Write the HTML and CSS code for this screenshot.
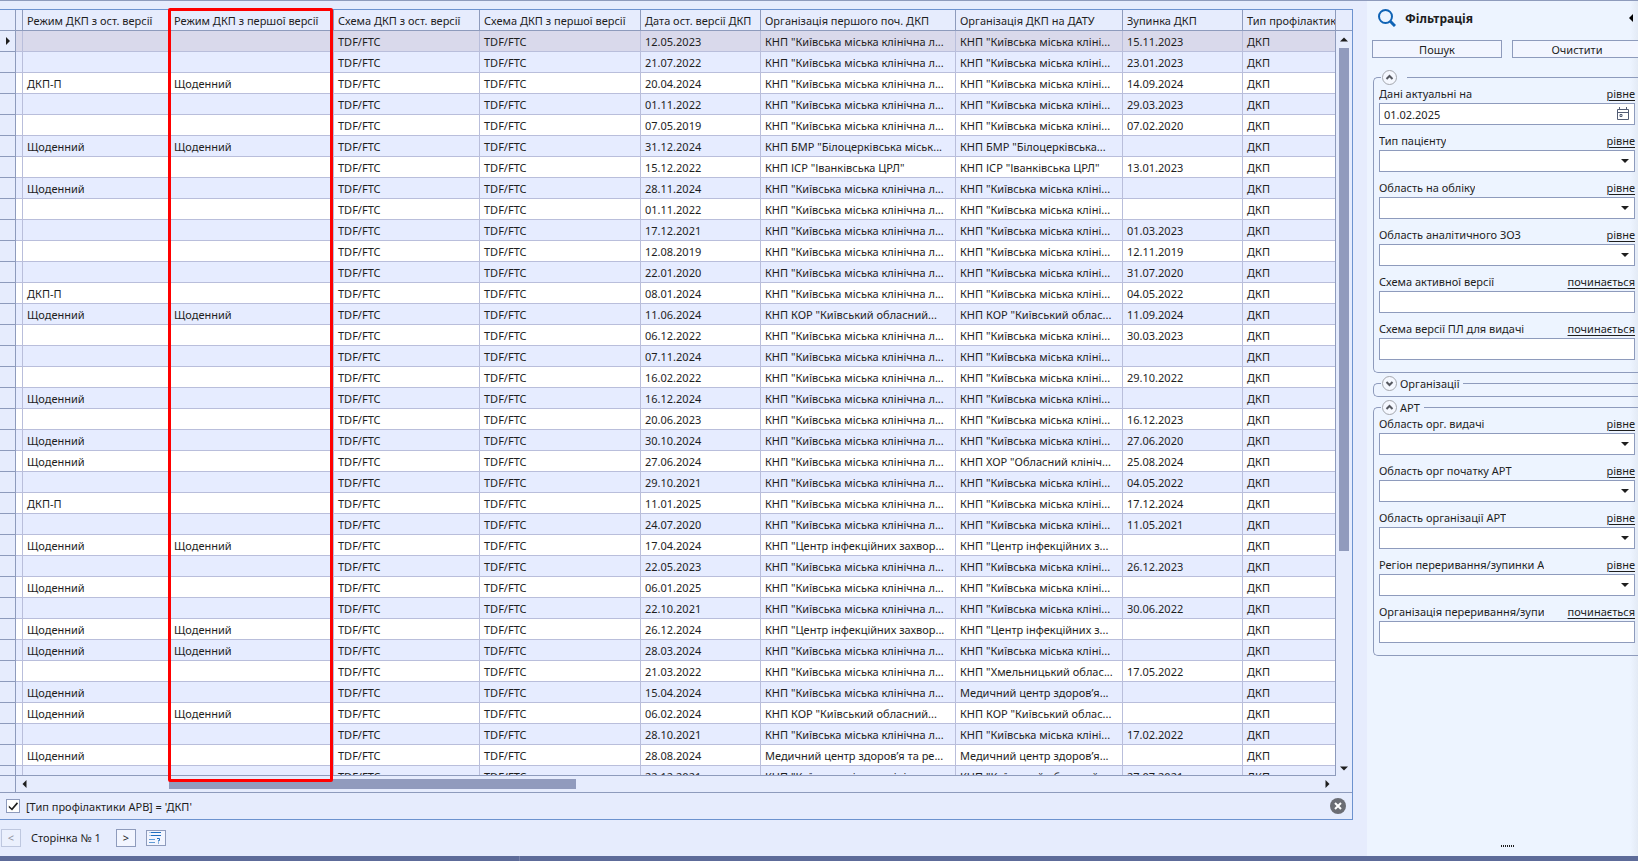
FILE: index.html
```
<!DOCTYPE html>
<html lang="uk">
<head>
<meta charset="utf-8">
<title>Фільтрація</title>
<link rel="stylesheet" href="styles.css">
</head>
<body>
<div class="workspace">
  <main class="content">
    <section class="grid">
      <div class="viewport">
        <table class="table">
          <colgroup>
            <col class="c-mark"><col class="c-gap"><col class="c-mode-last"><col class="c-mode-first">
            <col class="c-scheme-last"><col class="c-scheme-first"><col class="c-date"><col class="c-org-first">
            <col class="c-org-date"><col class="c-stop"><col>
          </colgroup>
          <thead>
            <tr>
              <th></th><th></th>
              <th>Режим ДКП з ост. версії</th>
              <th>Режим ДКП з першої версії</th>
              <th>Схема ДКП з ост. версії</th>
              <th>Схема ДКП з першої версії</th>
              <th>Дата ост. версії ДКП</th>
              <th>Організація першого поч. ДКП</th>
              <th>Організація ДКП на ДАТУ</th>
              <th>Зупинка ДКП</th>
              <th>Тип профілактики АРВ</th>
            </tr>
          </thead>
          <tbody id="rows"></tbody>
        </table>
      </div>
      <div class="vscroll">
        <div class="vscroll-head"></div>
        <svg class="arrow" width="8" height="5" viewBox="0 0 8 5"><path d="M0 4.5 4 0.5 8 4.5z"/></svg>
        <div class="vscroll-track"><div class="vscroll-thumb"></div></div>
        <svg class="arrow" width="8" height="5" viewBox="0 0 8 5"><path d="M0 0.5 4 4.5 8 0.5z"/></svg>
      </div>
      <div class="hscroll">
        <div class="hscroll-mark"></div>
        <svg class="arrow" width="5" height="8" viewBox="0 0 5 8"><path d="M4.5 0 0.5 4 4.5 8z"/></svg>
        <div class="hscroll-track"><div class="hscroll-thumb"></div></div>
        <svg class="arrow" width="5" height="8" viewBox="0 0 5 8"><path d="M0.5 0 4.5 4 0.5 8z"/></svg>
      </div>
      <div class="condition">
        <input class="check" type="checkbox" id="cond" checked>
        <label for="cond">[Тип профілактики АРВ] = 'ДКП'</label>
        <button class="clear" type="button" aria-label="Очистити умову">
          <svg width="16" height="16" viewBox="0 0 16 16"><circle cx="8" cy="8" r="8" fill="#6b6d74"/><path d="M5 5 11 11M11 5 5 11" stroke="#fff" stroke-width="2"/></svg>
        </button>
      </div>
      <div class="highlight"></div>
    </section>
    <nav class="pager">
      <button class="page-btn" type="button" disabled>&lt;</button>
      <span class="page-text">Сторінка № 1</span>
      <button class="page-btn" type="button">&gt;</button>
      <button class="page-btn count-btn" type="button" aria-label="Кількість записів">
        <svg width="14" height="13" viewBox="0 0 14 13" fill="none"><path d="M2 1.5H12M2 4.5H12" stroke="#1f6fc0"/><path d="M0 8.5H6M0 11.5H6" stroke="#5f9bd6"/><path d="M0 1.5H2M0 4.5H2" stroke="#a9c8ea"/><path d="M8 7.5H10.5V9.5H9.5V10.500M9.500 11.500V12.500" stroke="#1f6fc0"/></svg>
      </button>
    </nav>
  </main>
  <aside class="side">
    <header class="side-head">
      <svg width="18" height="18" viewBox="0 0 18 18" fill="none" stroke="#0f63b5"><circle cx="7.500" cy="7.500" r="6.500" stroke-width="2"/><path d="M12 12 17 17" stroke-width="3"/></svg>
      <h2>Фільтрація</h2>
      <button class="collapse" type="button" aria-label="Згорнути"><svg width="4" height="8" viewBox="0 0 4 8"><path d="M4 0 0 4 4 8z"/></svg></button>
    </header>
    <div class="actions">
      <button type="button">Пошук</button>
      <button type="button">Очистити</button>
    </div>
    <form class="groups" id="groups"></form>
    <div class="grip"></div>
  </aside>
</div>
<footer class="status"><span></span></footer>
<script src="app.js"></script>
</body>
</html>
```
FILE: styles.css
```
* { box-sizing: border-box; }

:root {
  --line: #8e9bbc;
  --frame: #6c92cf;
  --cell-line: #b9bedb;
  --bg: #e6ecfd;
}

body {
  margin: 0;
  height: 100vh;
  display: flex;
  flex-direction: column;
  overflow: hidden;
  border-top: 1px solid var(--line);
  background: var(--bg);
  color: #1e1e1e;
  font: 11px/16px "Noto Sans", "Open Sans", sans-serif;
}

button, input, select { font: inherit; color: inherit; margin: 0; padding: 0; }
button { background: none; border: 0; }

.workspace { flex: 1; min-height: 0; display: flex; }

.content {
  flex: 1;
  min-width: 0;
  display: flex;
  flex-direction: column;
  padding: 8px 14px 0 0;
}

.grid {
  position: relative;
  flex: 1;
  min-height: 0;
  display: grid;
  grid-template-columns: 1fr 16px;
  grid-template-rows: 1fr 16px auto;
  border: 1px solid var(--frame);
  border-left: 0;
}

.viewport {
  min-width: 0;
  min-height: 0;
  overflow: hidden;
  border-right: 1px solid var(--line);
  border-bottom: 1px solid var(--line);
}

.table { width: 100%; table-layout: fixed; border-collapse: separate; border-spacing: 0; }
.c-mark { width: 16px; }
.c-gap { width: 7px; }
.c-mode-last { width: 147px; }
.c-mode-first { width: 164px; }
.c-scheme-last { width: 146px; }
.c-scheme-first { width: 161px; }
.c-date, .c-stop { width: 120px; }
.c-org-first { width: 195px; }
.c-org-date { width: 167px; }

.table th, .table td {
  height: 21px;
  padding: 2px 0 0 4px;
  border-right: 1px solid var(--cell-line);
  border-bottom: 1px solid var(--cell-line);
  font-weight: 400;
  text-align: left;
  white-space: nowrap;
  overflow: hidden;
}
.table th { border-color: var(--line); }
.table th:last-child, .table td:last-child { border-right: 0; }
.table td { background: #fff; }
.table tr:nth-child(even) td { background: #e6ecff; }
.table tr.current td { background: #d9d9eb; }
.table tbody td:first-child {
  padding: 0 0 0 6px;
  border-color: var(--line);
  background: var(--bg);
}
.table th:nth-child(-n+2), .table td:nth-child(2) { padding: 0; }
.table td svg { display: block; }

.arrow { display: block; flex: none; fill: #1e1e1e; }

.vscroll { display: flex; flex-direction: column; align-items: center; gap: 6px; padding-bottom: 5px; }
.vscroll-head { align-self: stretch; height: 21px; border-bottom: 1px solid var(--line); }
.vscroll-track { flex: 1; width: 10px; margin-bottom: 4px; }
.vscroll-thumb { height: 71%; background: #919bbd; }

.hscroll { grid-column: 1 / -1; display: flex; align-items: center; padding-right: 22px; }
.hscroll-mark { align-self: stretch; width: 16px; margin-right: 6px; border-right: 1px solid var(--line); }
.hscroll-track { flex: 1; height: 10px; padding: 0 10% 0 142px; margin: 0 6px 0 0; }
.hscroll-thumb { width: 40%; height: 10px; background: #919bbd; }

.condition {
  grid-column: 1 / -1;
  height: 27px;
  display: flex;
  align-items: center;
  gap: 6px;
  padding: 0 6px;
  border-top: 1px solid var(--line);
}
.condition label { padding-top: 2px; }
.check { appearance: none; width: 14px; height: 14px; border: 1px solid var(--line); background: #fff; }
.check:checked::before {
  content: "";
  display: block;
  width: 12px;
  height: 12px;
  background: #1e1e1e;
  clip-path: polygon(15% 45%, 40% 68%, 82% 18%, 92% 30%, 42% 88%, 15% 62%);
}
.clear { margin-left: auto; height: 16px; }
.clear svg { display: block; }

.highlight {
  position: absolute;
  left: 168px;
  top: -2px;
  bottom: 37px;
  width: 165px;
  border: 3px solid #f00;
  border-radius: 2px;
  pointer-events: none;
}

.pager { height: 36px; display: flex; align-items: center; gap: 10px; padding: 0 1px 1px; }
.page-btn { width: 20px; height: 18px; line-height: 16px; border: 1px solid var(--line); background: #f2f5ff; }
.page-btn:disabled { opacity: .45; }
.page-text { min-width: 75px; padding-top: 1px; }
.count-btn { display: flex; align-items: center; justify-content: center; height: 16px; }

.side {
  width: 271px;
  display: flex;
  flex-direction: column;
  overflow: hidden;
  padding: 8px 0 0 5px;
  background: linear-gradient(to left, #e3eaf5, #edf4ff 8px);
}
.side-head { display: flex; align-items: center; gap: 9px; height: 18px; padding: 0 5px 0 6px; }
.side-head h2 { margin: 0; padding-top: 2px; font-size: 12px; line-height: 18px; font-weight: 700; }
.collapse { margin-left: auto; height: 8px; }
.collapse svg { display: block; }

.actions { display: flex; gap: 10px; margin: 13px -4px 12px 0; }
.actions button { flex: 1; height: 18px; line-height: 17px; border: 1px solid var(--line); background: #f2f5ff; }

.groups { display: flex; flex-direction: column; gap: 3px; padding-left: 1px; }
.group {
  min-width: 0;
  margin: 0;
  padding: 1px 3px 12px 5px;
  border: 1px solid var(--line);
  border-right: 0;
  border-radius: 5px 0 0 5px;
}
.group.closed { padding: 5px 0 0 5px; }
.group legend {
  display: flex;
  align-items: center;
  gap: 3px;
  height: 15px;
  margin-left: 2px;
  padding: 0 4px 0 1px;
}
.group.untitled legend { padding-right: 7px; }
.toggle, .toggle svg { display: block; width: 15px; height: 15px; }
.fields { display: grid; gap: 8px; }
.field-head { display: flex; justify-content: space-between; height: 17px; }
.field-head label { overflow: hidden; white-space: nowrap; }
.field-head a { color: inherit; text-underline-offset: 2px; }
.control { position: relative; }
.control input, .control select {
  display: block;
  appearance: none;
  width: 100%;
  height: 22px;
  padding: 0 24px 0 4px;
  border: 1px solid var(--line);
  border-radius: 0;
  background: #fff;
}
.control svg { position: absolute; right: 6px; top: 9px; pointer-events: none; }
.control .calendar { top: 4px; right: 6px; }

.grip {
  width: 14px;
  height: 2px;
  margin: auto 123px 9px auto;
  background: repeating-linear-gradient(to right, #1e1e1e 0 1px, transparent 1px 2px);
}

.status { height: 5px; background: #5d6b99; }
.status span { display: block; width: 520px; height: 5px; border-right: 1px solid #7783ab; }
```
FILE: app.js
```
const KYIV = ['КНП "Київська міська клінічна л...', 'КНП "Київська міська кліні...'];
const BILA = ['КНП БМР "Білоцерківська міськ...', 'КНП БМР "Білоцерківська...'];
const IVAN = ['КНП ІСР "Іванківська ЦРЛ"', 'КНП ІСР "Іванківська ЦРЛ"'];
const KOR = ['КНП КОР "Київський обласний...', 'КНП КОР "Київський облас...'];
const HOR = [KYIV[0], 'КНП ХОР "Обласний клініч...'];
const INF = ['КНП "Центр інфекційних захвор...', 'КНП "Центр інфекційних з...'];
const KHM = [KYIV[0], 'КНП "Хмельницький облас...'];
const MED = ['Медичний центр здоров’я та ре...', 'Медичний центр здоров’я...'];
const D = 'Щоденний', P = 'ДКП-П';

const rows = [
  ['', '', '12.05.2023', KYIV, '15.11.2023'],
  ['', '', '21.07.2022', KYIV, '23.01.2023'],
  [P, D, '20.04.2024', KYIV, '14.09.2024'],
  ['', '', '01.11.2022', KYIV, '29.03.2023'],
  ['', '', '07.05.2019', KYIV, '07.02.2020'],
  [D, D, '31.12.2024', BILA, ''],
  ['', '', '15.12.2022', IVAN, '13.01.2023'],
  [D, '', '28.11.2024', KYIV, ''],
  ['', '', '01.11.2022', KYIV, ''],
  ['', '', '17.12.2021', KYIV, '01.03.2023'],
  ['', '', '12.08.2019', KYIV, '12.11.2019'],
  ['', '', '22.01.2020', KYIV, '31.07.2020'],
  [P, '', '08.01.2024', KYIV, '04.05.2022'],
  [D, D, '11.06.2024', KOR, '11.09.2024'],
  ['', '', '06.12.2022', KYIV, '30.03.2023'],
  ['', '', '07.11.2024', KYIV, ''],
  ['', '', '16.02.2022', KYIV, '29.10.2022'],
  [D, '', '16.12.2024', KYIV, ''],
  ['', '', '20.06.2023', KYIV, '16.12.2023'],
  [D, '', '30.10.2024', KYIV, '27.06.2020'],
  [D, '', '27.06.2024', HOR, '25.08.2024'],
  ['', '', '29.10.2021', KYIV, '04.05.2022'],
  [P, '', '11.01.2025', KYIV, '17.12.2024'],
  ['', '', '24.07.2020', KYIV, '11.05.2021'],
  [D, D, '17.04.2024', INF, ''],
  ['', '', '22.05.2023', KYIV, '26.12.2023'],
  [D, '', '06.01.2025', KYIV, ''],
  ['', '', '22.10.2021', KYIV, '30.06.2022'],
  [D, D, '26.12.2024', INF, ''],
  [D, D, '28.03.2024', KYIV, ''],
  ['', '', '21.03.2022', KHM, '17.05.2022'],
  [D, '', '15.04.2024', [KYIV[0], MED[1]], ''],
  [D, D, '06.02.2024', KOR, ''],
  ['', '', '28.10.2021', KYIV, '17.02.2022'],
  [D, '', '28.08.2024', MED, ''],
  ['', '', '22.12.2021', [KYIV[0], 'КНП "Київський обласний...'], '27.07.2021'],
];

const marker = '<svg width="4" height="8" viewBox="0 0 4 8"><path d="M0 0 4 4 0 8z" fill="#1e1e1e"/></svg>';

document.getElementById('rows').innerHTML = rows.map(([last, first, date, org, stop], i) => {
  const cells = [i ? '' : marker, '', last, first, 'TDF/FTC', 'TDF/FTC', date, org[0], org[1], stop, 'ДКП'];
  return `<tr${i ? '' : ' class="current"'}>${cells.map(c => `<td>${c}</td>`).join('')}</tr>`;
}).join('');

const EQ = 'рівне', STARTS = 'починається';
const groups = [
  { title: '', open: true, fields: [
    ['Дані актуальні на', EQ, 'date'],
    ['Тип пацієнту', EQ, 'select'],
    ['Область на обліку', EQ, 'select'],
    ['Область аналітичного ЗОЗ', EQ, 'select'],
    ['Схема активної версії', STARTS, 'text'],
    ['Схема версії ПЛ для видачі', STARTS, 'text'],
  ] },
  { title: 'Організації', open: false, fields: [] },
  { title: 'АРТ', open: true, fields: [
    ['Область орг. видачі', EQ, 'select'],
    ['Область орг початку АРТ', EQ, 'select'],
    ['Область організації АРТ', EQ, 'select'],
    ['Регіон переривання/зупинки А', EQ, 'select'],
    ['Організація переривання/зупи', STARTS, 'text'],
  ] },
];

const caret = '<svg width="8" height="4" viewBox="0 0 8 4"><path d="M0 0H8L4 4z" fill="#1e1e1e"/></svg>';
const calendar = '<svg class="calendar" width="12" height="13" viewBox="0 0 12 13" fill="none" stroke="#525c74"><path d="M0.500 2.500H11.500V12.500H0.500zM0.500 5.500H11.500M2.500 0V3M9.500 0V3M3 7.500H5V9.500H3z"/></svg>';

const control = (id, type) => {
  if (type === 'select') return `<select id="${id}"><option></option></select>${caret}`;
  if (type === 'date') return `<input id="${id}" type="text" value="01.02.2025">${calendar}`;
  return `<input id="${id}" type="text">`;
};

document.getElementById('groups').innerHTML = groups.map((g, gi) => {
  const chevron = g.open ? 'M4.500 9 7.500 6 10.500 9' : 'M4.500 6 7.500 9 10.500 6';
  const fields = g.fields.map(([label, op, type], fi) => {
    const id = `f${gi}-${fi}`;
    return `<div class="field"><div class="field-head"><label for="${id}">${label}</label><a href="#">${op}</a></div><div class="control">${control(id, type)}</div></div>`;
  }).join('');
  return `<fieldset class="group${g.open ? '' : ' closed'}${g.title ? '' : ' untitled'}">
    <legend><button class="toggle" type="button" aria-label="Розгорнути або згорнути"><svg viewBox="0 0 15 15" fill="none"><circle cx="7.500" cy="7.500" r="7" fill="#f5f8ff" stroke="#a3a6ad"/><path d="${chevron}" stroke="#55585f" stroke-width="2"/></svg></button><span>${g.title}</span></legend>
    <div class="fields">${fields}</div>
  </fieldset>`;
}).join('');
```
